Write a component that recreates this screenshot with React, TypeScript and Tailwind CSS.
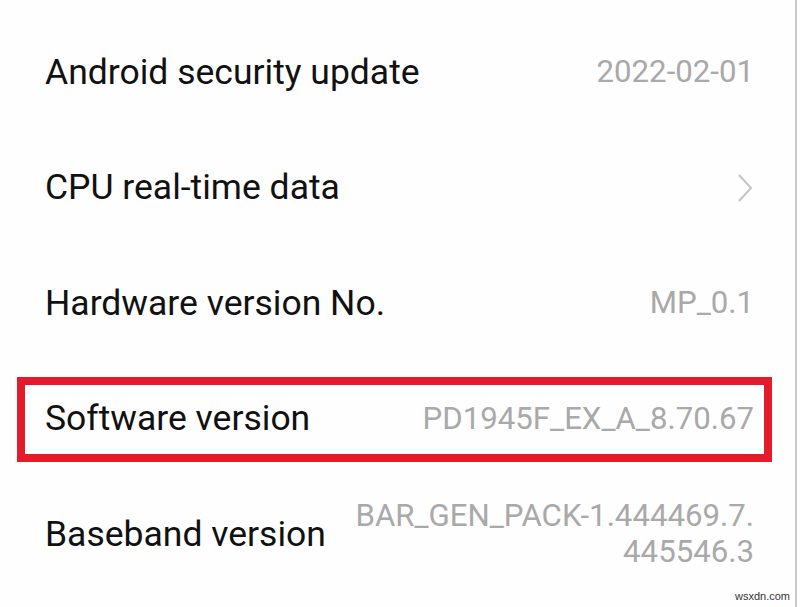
import React from "react";

const Row = ({ label, children, boxed }: { label: string; children?: React.ReactNode; boxed?: boolean }) => (
  <div className="relative flex h-[115.5px] items-center justify-between pl-[45px] pr-[41px]">
    {boxed && (
      <div className="pointer-events-none absolute left-[17px] right-[23px] top-[15.5px] h-[85px] border-[8px] border-[#e31b2a]" />
    )}
    <span className="text-[35.5px] leading-none text-[#111111]">{label}</span>
    {children}
  </div>
);

const Value = ({ children }: { children: React.ReactNode }) => (
  <span className="text-right text-[31.2px] leading-[36px] text-[#a9a9a9]">{children}</span>
);

export default function App() {
  return (
    <div
      className="relative h-[607px] w-[800px] overflow-hidden bg-[#fefefe]"
      style={{ fontFamily: "Roboto, 'Noto Sans', sans-serif" }}
    >
      <div className="flex h-full">
        <div className="flex flex-1 flex-col pt-[14.5px]">
          <Row label="Android security update">
            <Value>2022-02-01</Value>
          </Row>
          <Row label="CPU real-time data">
            <svg width="16" height="30" viewBox="0 0 16 30" className="mr-[1px]">
              <polyline points="2,2 14,15 2,28" fill="none" stroke="#c4c4c4" strokeWidth="2" />
            </svg>
          </Row>
          <Row label="Hardware version No.">
            <Value>MP_0.1</Value>
          </Row>
          <Row label="Software version" boxed>
            <Value>PD1945F_EX_A_8.70.67</Value>
          </Row>
          <Row label="Baseband version">
            <Value>
              BAR_GEN_PACK-1.444469.7.
              <br />
              445546.3
            </Value>
          </Row>
        </div>
        <div className="mr-[3px] w-[2px] bg-[#c8c8c8]" />
      </div>
      <span
        className="absolute bottom-[3px] right-[10px] text-[11px] text-[#333]"
        style={{ fontFamily: "'Liberation Sans', sans-serif" }}
      >
        wsxdn.com
      </span>
    </div>
  );
}
